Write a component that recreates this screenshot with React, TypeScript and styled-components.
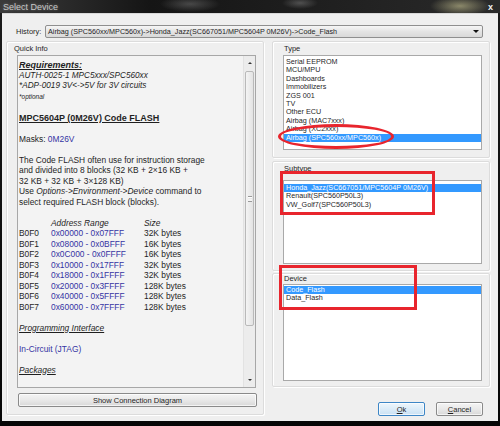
import React from "react";
import styled, { createGlobalStyle } from "styled-components";

const GlobalStyle = createGlobalStyle`
	html, body {
		margin: 0;
		padding: 0;
		background: #111;
	}
	* {
		box-sizing: border-box;
	}
`;

const Window = styled.div`
	width: 500px;
	height: 426px;
	display: flex;
	flex-direction: column;
	overflow: hidden;
	font-family: "Liberation Sans", Arial, sans-serif;
	color: #1f1f1f;
	background: linear-gradient(#1b1b1b, #060606);
`;

const TitleBar = styled.div`
	height: 13px;
	flex: none;
	display: flex;
	align-items: center;
	justify-content: space-between;
	padding: 0 7px 0 3px;
	background:
		radial-gradient(ellipse 30px 8px at 190px 4px, rgba(120, 120, 120, 0.5), transparent),
		radial-gradient(ellipse 18px 6px at 300px 3px, rgba(140, 140, 140, 0.45), transparent),
		radial-gradient(ellipse 30px 10px at 460px 6px, rgba(220, 215, 160, 0.55), transparent),
		linear-gradient(90deg, #3a3a3a, #151515 30%, #1e1e1e 60%, #2a2a2a);
`;

const TitleText = styled.span`
	font-size: 9px;
	color: #c6c6c6;
	text-shadow: 0 0 3px rgba(255, 255, 255, 0.35);
`;

const CloseGlyph = styled.span`
	font-size: 9px;
	font-weight: bold;
	color: #f2f2f2;
`;

const Body = styled.div`
	flex: 1;
	margin: 0 2px 6px;
	display: flex;
	flex-direction: column;
	padding: 11px 8px 5px 4px;
	background: #efefef;
	border-top: 1px solid #d8d8d8;
`;

const HistoryRow = styled.div`
	height: 13px;
	display: flex;
	align-items: center;
`;

const HistoryLabel = styled.span`
	width: 39px;
	padding-left: 10px;
	font-size: 7.5px;
`;

const Combo = styled.div`
	flex: 1;
	height: 13px;
	margin-right: 7px;
	display: flex;
	align-items: center;
	justify-content: space-between;
	padding: 0 3px 0 2px;
	font-size: 7.2px;
	white-space: nowrap;
	border: 1px solid #8f8f8f;
	border-radius: 2px;
	background: linear-gradient(#f6f6f6, #e4e4e4 50%, #d9d9d9);
`;

const DownArrow = styled.span`
	width: 0;
	height: 0;
	border-left: 3px solid transparent;
	border-right: 3px solid transparent;
	border-top: 3px solid #111;
`;

const Columns = styled.div`
	flex: 1;
	margin-top: 3px;
	display: grid;
	grid-template-columns: 258px 218px;
	column-gap: 8px;
`;

const RightColumn = styled.div`
	display: flex;
	flex-direction: column;
`;

const Group = styled.div<{ $h: number; $pt: number; $pb: number; $mt?: number }>`
	position: relative;
	height: ${(p) => p.$h}px;
	margin-top: ${(p) => p.$mt ?? 0}px;
	display: flex;
	flex-direction: column;
	padding: ${(p) => p.$pt}px 7px ${(p) => p.$pb}px 10px;
	border: 1px solid #dcdcdc;
	box-shadow: inset 1px 1px 0 #fff, 1px 1px 0 #fff;
	border-radius: 2px;
`;

const GroupLabel = styled.div<{ $indent: number }>`
	height: 9px;
	line-height: 9px;
	font-size: 7.5px;
	margin-left: ${(p) => p.$indent}px;
`;

const InfoPanel = styled.div`
	height: 335px;
	margin-top: 2px;
	display: flex;
	border: 1px solid #a7a7a7;
	background: #f3f3f3;
`;

const InfoText = styled.div`
	flex: 1;
	padding: 4px 0 0 1px;
	font-size: 8.4px;
	white-space: nowrap;
	overflow: hidden;
`;

const Line = styled.div`
	height: 10.5px;
	line-height: 10.5px;
`;

const Heading = styled(Line)`
	font-size: 9px;
	font-weight: bold;
	font-style: italic;
	text-decoration: underline;
`;

const Title = styled(Line)`
	font-size: 9px;
	font-weight: bold;
	text-decoration: underline;
`;

const Note = styled(Line)<{ $small?: boolean }>`
	font-style: italic;
	font-size: ${(p) => (p.$small ? 6.5 : 8.2)}px;
`;

const Section = styled(Line)`
	font-style: italic;
	text-decoration: underline;
`;

const Blue = styled.span`
	color: #3533a3;
`;

const BlueLine = styled(Line)`
	color: #3533a3;
`;

const Em = styled.span`
	font-style: italic;
`;

const AddrRow = styled(Line)`
	display: grid;
	grid-template-columns: 32px 93px auto;
`;

const ScrollBar = styled.div`
	width: 12px;
	flex: none;
	display: flex;
	flex-direction: column;
	align-items: center;
	background: #ececec;
	border-left: 1px solid #e2e2e2;
`;

const ScrollArrow = styled.div<{ $up?: boolean }>`
	height: 14px;
	width: 100%;
	display: flex;
	align-items: center;
	justify-content: center;
	&::before {
		content: "";
		border-left: 2px solid transparent;
		border-right: 2px solid transparent;
		${(p) =>
			p.$up ? "border-bottom: 2px solid #333;" : "border-top: 2px solid #333;"}
	}
`;

const Thumb = styled.div`
	width: 9px;
	height: 255px;
	margin-top: 1px;
	border: 1px solid #b9b9b9;
	border-radius: 2px;
	background: linear-gradient(90deg, #f4f4f4, #e3e3e3);
	display: flex;
	align-items: center;
	justify-content: center;
	&::before {
		content: "";
		width: 4px;
		height: 4px;
		border-top: 1px solid #9a9a9a;
		border-bottom: 1px solid #9a9a9a;
		box-shadow: inset 0 1px 0 #fff, inset 0 -2px 0 #f4f4f4, inset 0 -1px 0 #9a9a9a;
	}
`;

const ScrollSpace = styled.div`
	flex: 1;
`;

const Button = styled.button<{ $default?: boolean }>`
	height: 14px;
	padding: 0;
	font-family: "Liberation Sans", Arial, sans-serif;
	font-size: 7.5px;
	color: #1f1f1f;
	border-radius: 2px;
	border: 1px solid ${(p) => (p.$default ? "#3d86c6" : "#8a8a8a")};
	background: ${(p) =>
		p.$default
			? "linear-gradient(#eef6fc, #dcecf8 50%, #c9e1f4)"
			: "linear-gradient(#f4f4f4, #e9e9e9 50%, #d8d8d8)"};
	box-shadow: inset 0 0 0 1px rgba(255, 255, 255, 0.7);
`;

const WideButton = styled(Button)`
	width: 239px;
	margin-top: 5px;
	margin-left: 1px;
`;

const ListBox = styled.div<{ $h: number; $mt: number; $pt: number }>`
	height: ${(p) => p.$h}px;
	margin-top: ${(p) => p.$mt}px;
	padding-top: ${(p) => p.$pt}px;
	background: #fff;
	border: 1px solid #a9a9a9;
	font-size: 7.2px;
`;

const Item = styled.div<{ $selected?: boolean }>`
	height: 8.4px;
	line-height: 8.4px;
	padding-left: 2px;
	white-space: nowrap;
	background: ${(p) => (p.$selected ? "#3399ff" : "transparent")};
	color: ${(p) => (p.$selected ? "#fff" : "#1f1f1f")};
`;

const RedEllipse = styled.div`
	position: absolute;
	left: 5px;
	top: 82px;
	width: 116px;
	height: 25px;
	border: 3px solid #e8252d;
	border-radius: 50%;
`;

const RedBox = styled.div<{ $l: number; $t: number; $w: number; $h: number }>`
	position: absolute;
	left: ${(p) => p.$l}px;
	top: ${(p) => p.$t}px;
	width: ${(p) => p.$w}px;
	height: ${(p) => p.$h}px;
	border: 3px solid #e8252d;
`;

const ButtonRow = styled.div`
	margin-top: 15px;
	display: flex;
	justify-content: flex-end;
	gap: 11px;
	padding-right: 7px;
`;

const DialogButton = styled(Button)`
	width: 47px;
`;

const blocks = [
	["B0F0", "0x00000 - 0x07FFF", "32K bytes"],
	["B0F1", "0x08000 - 0x0BFFF", "16K bytes"],
	["B0F2", "0x0C000 - 0x0FFFF", "16K bytes"],
	["B0F3", "0x10000 - 0x17FFF", "32K bytes"],
	["B0F4", "0x18000 - 0x1FFFF", "32K bytes"],
	["B0F5", "0x20000 - 0x3FFFF", "128K bytes"],
	["B0F6", "0x40000 - 0x5FFFF", "128K bytes"],
	["B0F7", "0x60000 - 0x7FFFF", "128K bytes"],
];

const types = [
	"Serial EEPROM",
	"MCU/MPU",
	"Dashboards",
	"Immobilizers",
	"ZGS 001",
	"TV",
	"Other ECU",
	"Airbag (MAC7xxx)",
	"Airbag (XC2xxx)",
	"Airbag (SPC560xx/MPC560x)",
];

const subtypes = [
	"Honda_Jazz(SC667051/MPC5604P 0M26V)",
	"Renault(SPC560P50L3)",
	"VW_Golf7(SPC560P50L3)",
];

const devices = ["Code_Flash", "Data_Flash"];

const App = () => {
	return (
		<>
			<GlobalStyle />
			<Window>
				<TitleBar>
					<TitleText>Select Device</TitleText>
					<CloseGlyph>x</CloseGlyph>
				</TitleBar>
				<Body>
					<HistoryRow>
						<HistoryLabel>History:</HistoryLabel>
						<Combo>
							<span>Airbag (SPC560xx/MPC560x)-&gt;Honda_Jazz(SC667051/MPC5604P 0M26V)-&gt;Code_Flash</span>
							<DownArrow />
						</Combo>
					</HistoryRow>
					<Columns>
						<Group $h={374} $pt={2} $pb={7}>
							<GroupLabel $indent={-3}>Quick Info</GroupLabel>
							<InfoPanel>
								<InfoText>
									<Heading>Requirements:</Heading>
									<Note>AUTH-0025-1 MPC5xxx/SPC560xx</Note>
									<Note>*ADP-0019 3V&lt;-&gt;5V for 3V circuits</Note>
									<Note $small>*optional</Note>
									<Line />
									<Title>MPC5604P (0M26V) Code FLASH</Title>
									<Line />
									<Line>
										Masks: <Blue>0M26V</Blue>
									</Line>
									<Line />
									<Line>The Code FLASH often use for instruction storage</Line>
									<Line>and divided into 8 blocks (32 KB + 2×16 KB +</Line>
									<Line>32 KB + 32 KB + 3×128 KB)</Line>
									<Line>
										Use <Em>Options-&gt;Environment-&gt;Device</Em> command to
									</Line>
									<Line>select required FLASH block (blocks).</Line>
									<Line />
									<AddrRow>
										<span />
										<Em>Address Range</Em>
										<Em>Size</Em>
									</AddrRow>
									{blocks.map(([name, range, size]) => (
										<AddrRow key={name}>
											<span>{name}</span>
											<Blue>{range}</Blue>
											<span>{size}</span>
										</AddrRow>
									))}
									<Line />
									<Section>Programming Interface</Section>
									<Line />
									<BlueLine>In-Circuit (JTAG)</BlueLine>
									<Line />
									<Section>Packages</Section>
								</InfoText>
								<ScrollBar>
									<ScrollArrow $up />
									<Thumb />
									<ScrollSpace />
									<ScrollArrow />
								</ScrollBar>
							</InfoPanel>
							<WideButton>Show Connection Diagram</WideButton>
						</Group>
						<RightColumn>
							<Group $h={117} $pt={2} $pb={7} $mt={0}>
								<GroupLabel $indent={1}>Type</GroupLabel>
								<ListBox $h={97} $mt={2} $pt={2}>
									{types.map((t, i) => (
										<Item key={t} $selected={i === types.length - 1}>
											{t}
										</Item>
									))}
								</ListBox>
								<RedEllipse />
							</Group>
							<Group $h={110} $pt={2} $pb={6} $mt={3}>
								<GroupLabel $indent={1}>Subtype</GroupLabel>
								<ListBox $h={86} $mt={7} $pt={3}>
									{subtypes.map((t, i) => (
										<Item key={t} $selected={i === 0}>
											{t}
										</Item>
									))}
								</ListBox>
								<RedBox $l={7} $t={9} $w={155} $h={44} />
							</Group>
							<Group $h={114} $pt={0} $pb={5} $mt={2}>
								<GroupLabel $indent={1}>Device</GroupLabel>
								<ListBox $h={99} $mt={1} $pt={1}>
									{devices.map((t, i) => (
										<Item key={t} $selected={i === 0}>
											{t}
										</Item>
									))}
								</ListBox>
								<RedBox $l={6} $t={-9} $w={138} $h={45} />
							</Group>
							<ButtonRow>
								<DialogButton $default>
									<u>O</u>k
								</DialogButton>
								<DialogButton>
									<u>C</u>ancel
								</DialogButton>
							</ButtonRow>
						</RightColumn>
					</Columns>
				</Body>
			</Window>
		</>
	);
};

export default App;
